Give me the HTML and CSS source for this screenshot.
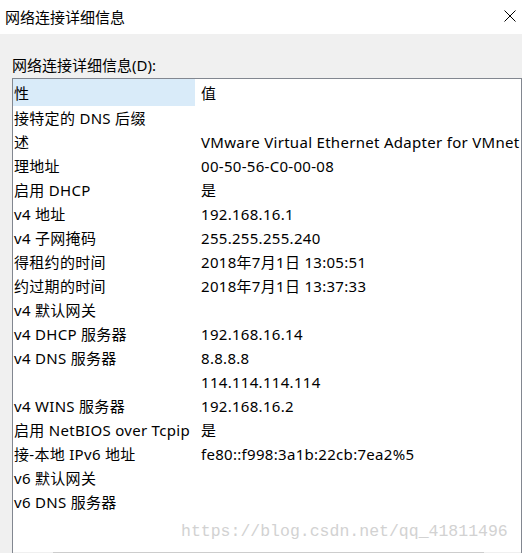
FILE: index.html
```html
<!DOCTYPE html>
<html lang="zh-CN">
  <head>
    <meta charset="UTF-8" />
    <title>网络连接详细信息</title>
    <link rel="stylesheet" href="styles.css">
  </head>
  <body>
    <div class="titlebar">
      <span class="title">网络连接详细信息</span>
      <svg class="close" width="12" height="12" viewBox="0 0 12 12">
        <path d="M0.5 0.5 L11.5 11.5 M11.5 0.5 L0.5 11.5" stroke="#000" stroke-width="1" fill="none" />
      </svg>
    </div>

    <div class="dialog">
      <div class="label">网络连接详细信息(D):</div>
      <div class="listbox">
        <div class="list">
          <div class="row header">
            <div class="cell name hot">性</div>
            <div class="cell value">值</div>
          </div>
          <div class="row"><div class="cell name">接特定的 DNS 后缀</div><div class="cell value"></div></div>
          <div class="row"><div class="cell name">述</div><div class="cell value">VMware Virtual Ethernet Adapter for VMnet</div></div>
          <div class="row"><div class="cell name">理地址</div><div class="cell value">00-50-56-C0-00-08</div></div>
          <div class="row"><div class="cell name">启用 DHCP</div><div class="cell value">是</div></div>
          <div class="row"><div class="cell name">v4 地址</div><div class="cell value">192.168.16.1</div></div>
          <div class="row"><div class="cell name">v4 子网掩码</div><div class="cell value">255.255.255.240</div></div>
          <div class="row"><div class="cell name">得租约的时间</div><div class="cell value">2018年7月1日 13:05:51</div></div>
          <div class="row"><div class="cell name">约过期的时间</div><div class="cell value">2018年7月1日 13:37:33</div></div>
          <div class="row"><div class="cell name">v4 默认网关</div><div class="cell value"></div></div>
          <div class="row"><div class="cell name">v4 DHCP 服务器</div><div class="cell value">192.168.16.14</div></div>
          <div class="row"><div class="cell name">v4 DNS 服务器</div><div class="cell value">8.8.8.8</div></div>
          <div class="row"><div class="cell name"></div><div class="cell value">114.114.114.114</div></div>
          <div class="row"><div class="cell name">v4 WINS 服务器</div><div class="cell value">192.168.16.2</div></div>
          <div class="row"><div class="cell name">启用 NetBIOS over Tcpip</div><div class="cell value">是</div></div>
          <div class="row"><div class="cell name">接-本地 IPv6 地址</div><div class="cell value">fe80::f998:3a1b:22cb:7ea2%5</div></div>
          <div class="row"><div class="cell name">v6 默认网关</div><div class="cell value"></div></div>
          <div class="row"><div class="cell name">v6 DNS 服务器</div><div class="cell value"></div></div>
        </div>
        <div class="hscroll">
          <div class="thumb"></div>
        </div>
      </div>
    </div>

    <div class="watermark">https://blog.csdn.net/qq_41811496</div>
  </body>
</html>
```

FILE: styles.css
```css
body {
  margin: 0;
  padding: 0;
  background-color: #f0f0f0;
  font-family: "Noto Sans", "Noto Sans CJK SC", sans-serif;
  font-size: 15px;
  color: #000;
  height: 553px;
  overflow: hidden;
  position: relative;
}
.titlebar {
  background-color: #fff;
  height: 34px;
  display: flex;
  align-items: center;
  justify-content: space-between;
  padding: 0 6px 0 5px;
}
.title {
  line-height: 34px;
}
.close {
  margin-top: -2px;
}
.dialog {
  padding: 19px 0 0 12px;
}
.label {
  line-height: 24px;
  margin-bottom: 1px;
}
.listbox {
  background-color: #fff;
  border: 1px solid #828790;
  height: 490px;
  display: flex;
  flex-direction: column;
  overflow: hidden;
}
.list {
  flex: 1;
  overflow: hidden;
}
.row {
  display: flex;
  height: 24px;
  line-height: 24px;
  white-space: nowrap;
}
.row.header {
  height: 27px;
}
.header .cell {
  padding-top: 2px;
}
.cell {
  letter-spacing: 0.3px;
}
.cell.name {
  width: 181px;
  padding-left: 1px;
  overflow: hidden;
}
.cell.name.hot {
  background-color: #d9ebf9;
}
.cell.value {
  padding-left: 6px;
  overflow: hidden;
}
.hscroll {
  height: 17px;
  background-color: #f0f0f0;
  padding-left: 40px;
}
.thumb {
  width: 431px;
  height: 17px;
  background-color: #cdcdcd;
}
.watermark {
  position: absolute;
  left: 181px;
  top: 520px;
  font-family: "Liberation Mono", monospace;
  font-size: 16.5px;
  color: #d2d2d2;
  line-height: 24px;
}
```
